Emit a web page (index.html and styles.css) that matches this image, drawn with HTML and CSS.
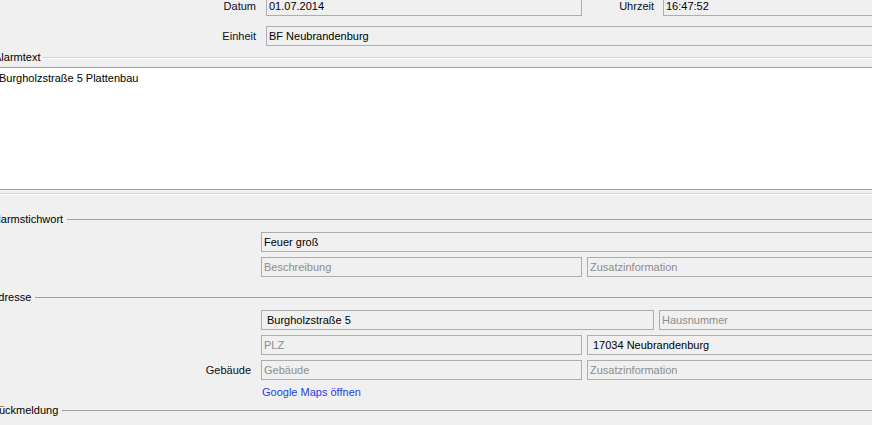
FILE: index.html
```html
<!DOCTYPE html>
<html lang="de">
<head>
<meta charset="utf-8">
<title>Einsatz</title>
<link rel="stylesheet" href="styles.css">
</head>
<body>
<div class="page">
  <div class="row top-row">
    <span class="lbl lbl-top">Datum</span>
    <div class="field w-date">01.07.2014</div>
    <span class="lbl lbl-time">Uhrzeit</span>
    <div class="field grow">16:47:52</div>
  </div>
  <div class="row top-row second">
    <span class="lbl lbl-top">Einheit</span>
    <div class="field grow">BF Neubrandenburg</div>
  </div>

  <div class="group-head light"><span>Alarmtext</span></div>
  <div class="memo">Burgholzstraße 5 Plattenbau</div>
  <div class="etched"></div>

  <div class="group-head section first-section"><span>Alarmstichwort</span></div>
  <div class="row grp first-row">
    <span class="lbl lbl-grp"></span>
    <div class="field grow">Feuer groß</div>
  </div>
  <div class="row grp">
    <span class="lbl lbl-grp"></span>
    <div class="field w-half ph">Beschreibung</div>
    <div class="field grow ph">Zusatzinformation</div>
  </div>

  <div class="group-head section"><span>Adresse</span></div>
  <div class="row grp first-row">
    <span class="lbl lbl-grp"></span>
    <div class="field w-street wide">Burgholzstraße 5</div>
    <div class="field grow ph">Hausnummer</div>
  </div>
  <div class="row grp">
    <span class="lbl lbl-grp"></span>
    <div class="field w-half ph">PLZ</div>
    <div class="field grow wide">17034 Neubrandenburg</div>
  </div>
  <div class="row grp">
    <span class="lbl lbl-grp">Gebäude</span>
    <div class="field w-half ph">Gebäude</div>
    <div class="field grow ph">Zusatzinformation</div>
  </div>
  <div class="link-row">
    <span class="lbl lbl-grp"></span>
    <a class="link" href="#">Google Maps öffnen</a>
  </div>

  <div class="group-head section last-section"><span>Rückmeldung</span></div>
  <div class="row grp tail">
    <span class="lbl lbl-grp"></span>
    <span class="tail-text">noch keine Rückmeldung erhalten</span>
  </div>
</div>
</body>
</html>
```

FILE: styles.css
```css
html, body {
  margin: 0;
  padding: 0;
  background: #f0f0f0;
  overflow: hidden;
  width: 872px;
  height: 425px;
}

.page {
  width: 900px;
  margin-top: -4px;
  margin-left: -6px;
  font-family: "Liberation Sans", Arial, sans-serif;
  font-size: 11px;
  color: #000;
}

.row {
  display: flex;
  align-items: center;
  height: 20px;
}

.top-row.second { margin-top: 10px; }

.grp { margin-top: 5px; }
.grp.first-row { margin-top: 6px; }

.lbl {
  box-sizing: border-box;
  flex: none;
  text-align: right;
  white-space: nowrap;
  color: #0c0c1a;
}
.lbl-top { width: 272px; padding-right: 10px; }
.lbl-time { width: 81px; padding-right: 9px; }
.lbl-grp { width: 267px; padding-right: 10px; }

.field {
  box-sizing: border-box;
  height: 20px;
  border: 1px solid #adadad;
  background: #f0f0f0;
  padding: 0 2px;
  line-height: 18px;
  white-space: nowrap;
  overflow: hidden;
  flex: none;
}
.field.grow { flex: 1; }
.field.w-date { width: 316px; }
.field.w-half { width: 321px; margin-right: 5px; }
.field.w-street { width: 393px; margin-right: 5px; }
.field.ph { color: #8d8d8d; }
.field.wide { padding-left: 5px; }

.group-head {
  display: flex;
  align-items: center;
  height: 13px;
  line-height: 13px;
  white-space: nowrap;
}
.group-head::after {
  content: "";
  flex: 1;
  margin-left: 4px;
  height: 1px;
  background: #a0a0a0;
}
.group-head.light {
  margin-top: 5px;
}
.group-head.light::after {
  margin-left: 3px;
  height: 1px;
  background: #d5d5d5;
  border-bottom: 1px solid #fff;
}

.group-head.section {
  margin-left: -3px;
  margin-top: 14px;
}
.group-head.section.first-section { margin-top: 18px; }
.group-head.section.last-section { margin-top: 5px; }

.memo {
  box-sizing: border-box;
  margin-top: 3px;
  height: 123px;
  background: #fff;
  border-top: 1px solid #a0a0a0;
  border-bottom: 1px solid #a0a0a0;
  padding: 4px 5px;
  line-height: 13px;
}

.etched {
  margin-top: 3px;
  height: 1px;
  background: #d5d5d5;
  border-bottom: 1px solid #fff;
}

.link-row {
  display: flex;
  height: 13px;
  line-height: 13px;
  margin-top: 6px;
}
.link {
  color: #1f3cf5;
  text-decoration: none;
  padding-left: 1px;
}

.row.tail {
  margin-top: 8px;
  align-items: flex-start;
}
.tail-text {
  color: #8d8d8d;
  padding-left: 8px;
  line-height: 13px;
}
```
